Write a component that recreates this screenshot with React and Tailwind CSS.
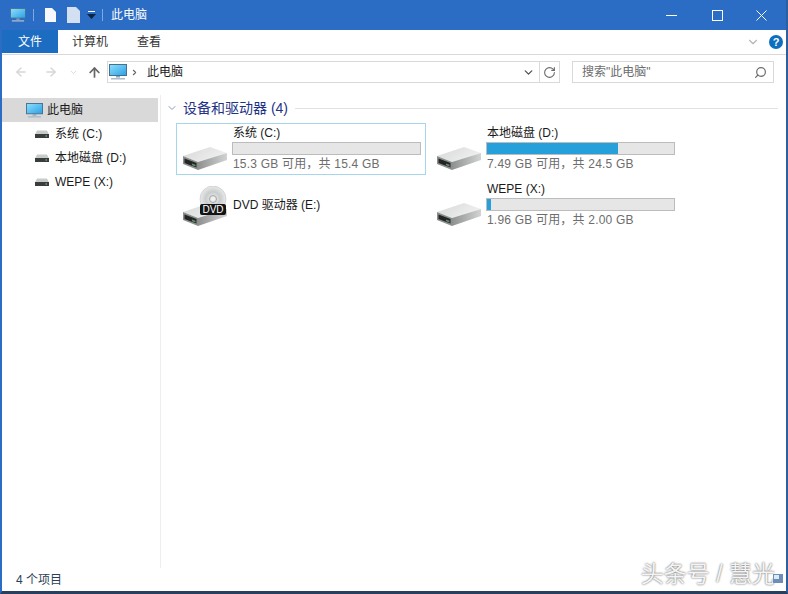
import React from "react";
import { ChevronDown, Search, RotateCw, ArrowUp, ArrowLeft, ArrowRight } from "lucide-react";

const FONT = "[font-family:'Liberation_Sans','Noto_Sans_CJK_SC',sans-serif]";

const Monitor = ({ className }) => (
  <svg viewBox="0 0 18 16" className={className}>
    <defs>
      <linearGradient id="scr" x1="0" y1="0" x2="1" y2="1">
        <stop offset="0" stopColor="#8fe0fb" />
        <stop offset="1" stopColor="#2a9fe6" />
      </linearGradient>
    </defs>
    <rect x="0.5" y="0.5" width="17" height="11" fill="url(#scr)" stroke="#45708f" />
    <rect x="7" y="12" width="4" height="1.5" fill="#8aa3b5" />
    <rect x="2" y="14" width="14" height="1.5" fill="#a9bccb" />
  </svg>
);

const SmallDrive = () => (
  <svg viewBox="0 0 14 8" className="w-[14px] h-[8px]">
    <path d="M2 0.5h10l2 4H0z" fill="#c9cbcb" />
    <rect x="0" y="4" width="14" height="4" fill="#3a3d3d" />
    <rect x="10.5" y="5.5" width="1.5" height="1" fill="#8fd18f" />
  </svg>
);

// shared drive body, drawn with the top-left corner at 0,0
const DriveBody = () => (
  <g>
    <path d="M0 9 L27 0 L44 6 L15 15 Z" fill="url(#driveTop)" />
    <path d="M15 15 L44 6 L44 13 L15 23 Z" fill="url(#driveSide)" />
    <path d="M0 9 L15 15 L15 23 L0 17 Z" fill="#8c8e8e" />
    <path d="M1.5 11.5 L13.5 16 L13.5 20.5 L1.5 16 Z" fill="#232525" />
    <path d="M9 16.5 L12.5 17.8 L12.5 19.5 L9 18.2 Z" fill="#5f8f6a" />
  </g>
);

const DriveDefs = () => (
  <defs>
    <linearGradient id="driveTop" x1="0" y1="0" x2="1" y2="0.5">
      <stop offset="0" stopColor="#d6d7d7" />
      <stop offset="1" stopColor="#f0f0f0" />
    </linearGradient>
    <linearGradient id="driveSide" x1="0" y1="0" x2="1" y2="0">
      <stop offset="0" stopColor="#8f9191" />
      <stop offset="1" stopColor="#d2d3d3" />
    </linearGradient>
  </defs>
);

const Drive = () => (
  <svg viewBox="0 0 44 24" className="w-[44px] h-[24px]">
    <DriveDefs />
    <DriveBody />
  </svg>
);

const DvdDrive = () => (
  <div className="relative w-[44px] h-[41px]">
    <svg viewBox="0 0 44 41" className="w-[44px] h-[41px]">
      <DriveDefs />
      <defs>
        <radialGradient id="disc">
          <stop offset="0" stopColor="#f6f7f7" />
          <stop offset="0.55" stopColor="#c9cccc" />
          <stop offset="1" stopColor="#e9ebeb" />
        </radialGradient>
      </defs>
      <g transform="translate(0 17)">
        <DriveBody />
      </g>
      <circle cx="30" cy="13" r="13" fill="url(#disc)" stroke="#b5b8b8" strokeWidth="0.5" />
      <circle cx="30" cy="13" r="3.5" fill="none" stroke="#a5a8a8" />
      <rect x="17" y="18" width="26" height="11" rx="2" fill="#141414" />
    </svg>
    <span className={`absolute left-[17px] top-[18px] w-[26px] text-center text-[10px] leading-[11px] text-white ${FONT}`}>DVD</span>
  </div>
);

const Tile = ({ label, free, pct, selected, icon }) => (
  <div className={`h-[52px] w-[250px] flex items-start border ${selected ? "border-[#a6d5ee]" : "border-transparent"}`}>
    <div className="w-[56px] pl-[6px] flex justify-start items-end h-[49px] pb-[2px]">{icon}</div>
    <div className={`flex-1 pr-[4px] ${free ? "" : "pt-[16px]"}`}>
      <div className="text-[12px] leading-[18px] text-[#1a1a1a]">{label}</div>
      {free && (
        <>
          <div className="h-[13px] w-[189px] -ml-[1px] bg-[#e6e6e6] border border-[#bcbcbc]">
            <div className="h-full bg-[#26a0da]" style={{ width: `${pct}%` }} />
          </div>
          <div className="text-[12px] leading-[18px] text-[#6d6d6d] tracking-[0.2px]">{free}</div>
        </>
      )}
    </div>
  </div>
);

const TreeItem = ({ label }) => (
  <div className="h-[24px] flex items-center pl-[33px] gap-[6px] text-[12px] text-[#1a1a1a]">
    <SmallDrive />
    <span>{label}</span>
  </div>
);

export default function App() {
  return (
    <div className={`w-[788px] h-[594px] flex flex-col bg-white border-l-2 border-r-2 border-l-[#2b6cc4] border-r-[#2b5f9e] border-b-[3px] border-b-[#28405e] ${FONT}`}>
      {/* Title bar */}
      <div className="h-[30px] bg-[#2b6cc4] flex items-center text-white shrink-0">
        <Monitor className="w-[16px] h-[14px] ml-[8px]" />
        <div className="w-px h-[12px] bg-[#7fa8de] ml-[7px]" />
        <svg viewBox="0 0 11 14" className="w-[11px] h-[14px] ml-[11px]">
          <path d="M0 0h7l4 4v10H0z" fill="#f6f8fb" />
        </svg>
        <svg viewBox="0 0 13 16" className="w-[13px] h-[16px] ml-[11px]">
          <path d="M0 0h9l4 4v12H0z" fill="#d3e0f2" />
        </svg>
        <svg viewBox="0 0 9 8" className="w-[9px] h-[8px] ml-[7px]">
          <rect x="1" y="0" width="7" height="1" fill="#fff" />
          <path d="M0 3h9L4.5 8z" fill="#10223c" />
        </svg>
        <div className="w-px h-[12px] bg-[#7fa8de] ml-[6px]" />
        <span className="ml-[8px] text-[12px]">此电脑</span>
        <div className="ml-auto flex items-center">
          <div className="w-[46px] flex justify-center">
            <svg viewBox="0 0 11 11" className="w-[11px] h-[11px]"><rect y="5" width="11" height="1" fill="#fff" /></svg>
          </div>
          <div className="w-[46px] flex justify-center">
            <svg viewBox="0 0 11 11" className="w-[11px] h-[11px]"><rect x="0.5" y="0.5" width="10" height="10" fill="none" stroke="#fff" /></svg>
          </div>
          <div className="w-[46px] flex justify-center pr-[4px]">
            <svg viewBox="0 0 11 11" className="w-[11px] h-[11px]"><path d="M0.5 0.5l10 10M10.5 0.5l-10 10" stroke="#fff" strokeWidth="1" /></svg>
          </div>
        </div>
      </div>

      {/* Ribbon tabs */}
      <div className="h-[25px] flex items-stretch border-b border-[#d9d9d9] shrink-0 text-[12px] text-[#333]">
        <div className="w-[56px] bg-[#1c6cc2] text-white flex items-center justify-center mb-[1px]">文件</div>
        <div className="ml-[14px] flex items-center">计算机</div>
        <div className="ml-[29px] flex items-center">查看</div>
        <div className="ml-auto flex items-center pr-[3px]">
          <ChevronDown size={14} className="text-[#b5b5b5]" />
          <div className="ml-[9px] w-[14px] h-[14px] rounded-full bg-[#0d6fbd] text-white text-[11px] font-bold flex items-center justify-center">?</div>
        </div>
      </div>

      {/* Navigation bar */}
      <div className="h-[40px] flex items-center shrink-0 pb-[6px]">
        <ArrowLeft size={14} strokeWidth={2.5} className="ml-[12px] text-[#d6d6d6]" />
        <ArrowRight size={14} strokeWidth={2.5} className="ml-[16px] text-[#d6d6d6]" />
        <ChevronDown size={9} strokeWidth={2.5} className="ml-[11px] text-[#d6d6d6]" />
        <ArrowUp size={15} className="ml-[9px] text-[#666666]" strokeWidth={2.75} />
        <div className="ml-[5px] w-[453px] h-[22px] border border-[#d9d9d9] flex items-center text-[12px] text-[#1a1a1a]">
          <Monitor className="w-[18px] h-[16px] ml-[1px]" />
          <ChevronDown size={9} strokeWidth={3} className="ml-[3px] -rotate-90 text-[#666666]" />
          <span className="ml-[8px]">此电脑</span>
          <ChevronDown size={13} strokeWidth={2.5} className="ml-auto mr-[4px] text-[#555]" />
          <div className="w-[20px] h-full border-l border-[#d9d9d9] flex items-center justify-center">
            <RotateCw size={13} className="text-[#6b6b6b]" />
          </div>
        </div>
        <div className="ml-[12px] w-[202px] h-[22px] border border-[#d9d9d9] flex items-center text-[12px] text-[#6d6d6d] pl-[9px] pr-[6px]">
          <span>搜索"此电脑"</span>
          <Search size={13} strokeWidth={2.25} className="ml-auto text-[#6b6b6b] -scale-x-100" />
        </div>
      </div>

      {/* Body */}
      <div className="flex-1 flex min-h-0">
        <div className="w-[159px] border-r border-[#eeeeee] pt-[3px] pb-[4px] shrink-0">
          <div className="h-[24px] w-[156px] bg-[#d9d9d9] flex items-center pl-[24px] gap-[3px] text-[12px] text-[#1a1a1a]">
            <Monitor className="w-[17px] h-[15px]" />
            <span className="ml-[1px]">此电脑</span>
          </div>
          <TreeItem label="系统 (C:)" />
          <TreeItem label="本地磁盘 (D:)" />
          <TreeItem label="WEPE (X:)" />
        </div>

        <div className="flex-1 pl-[5px] pt-[3px]">
          <div className="flex items-center h-[20px]">
            <ChevronDown size={12} className="text-[#8a9ab0]" />
            <span className="ml-[5px] text-[14px] text-[#1e3287]">设备和驱动器 (4)</span>
            <div className="ml-[7px] mr-[8px] flex-1 h-px bg-[#e2e2e2]" />
          </div>
          <div className="grid grid-cols-[254px_254px] gap-y-[4px] mt-[5px] ml-[10px]">
            <Tile label="系统 (C:)" free="15.3 GB 可用，共 15.4 GB" pct={0} selected icon={<Drive />} />
            <Tile label="本地磁盘 (D:)" free="7.49 GB 可用，共 24.5 GB" pct={70} icon={<Drive />} />
            <Tile label="DVD 驱动器 (E:)" icon={<DvdDrive />} />
            <Tile label="WEPE (X:)" free="1.96 GB 可用，共 2.00 GB" pct={2} icon={<Drive />} />
          </div>
        </div>
      </div>

      {/* Status bar */}
      <div className="relative h-[23px] flex items-center shrink-0 pl-[14px] text-[12px] text-[#2d3f55]">
        <span>4 个项目</span>
        <span className="absolute right-[11px] -top-[9px] text-[23px] leading-[30px] text-[#f4f4f4] [text-shadow:0_0_2px_#444]">头条号 / 慧光</span>
        <svg viewBox="0 0 10 9" className="absolute right-[3px] top-[6px] w-[10px] h-[9px]">
          <rect width="10" height="9" fill="#6b8fb5" />
          <rect x="1" y="1" width="5" height="4" fill="#dfe9f3" />
        </svg>
      </div>
    </div>
  );
}
